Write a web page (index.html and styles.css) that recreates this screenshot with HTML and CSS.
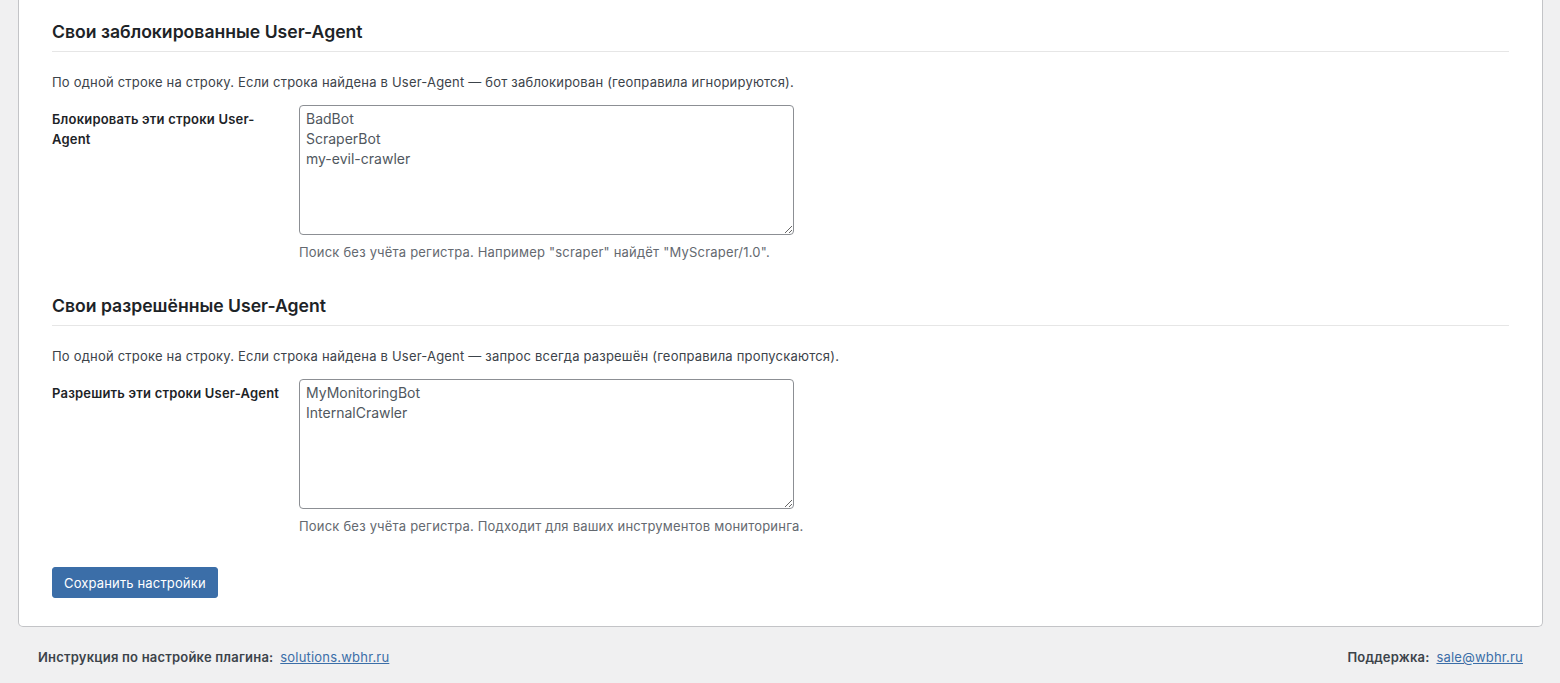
FILE: index.html
```html
<!DOCTYPE html>
<html lang="ru">
<head>
<meta charset="UTF-8">
<title>Настройки User-Agent</title>
<link rel="stylesheet" href="styles.css">
</head>
<body>
<div class="wrap">
    <div class="card">
        <h2 class="section-title">Свои заблокированные User-Agent</h2>
        <p class="section-desc">По одной строке на строку. Если строка найдена в User-Agent — бот заблокирован (геоправила игнорируются).</p>
        <div class="form-row">
            <label class="row-label" for="blockedUa">Блокировать эти строки User-Agent</label>
            <div class="row-field">
                <textarea id="blockedUa" class="ua-list">BadBot
ScraperBot
my-evil-crawler</textarea>
                <p class="hint">Поиск без учёта регистра. Например "scraper" найдёт "MyScraper/1.0".</p>
            </div>
        </div>

        <h2 class="section-title">Свои разрешённые User-Agent</h2>
        <p class="section-desc">По одной строке на строку. Если строка найдена в User-Agent — запрос всегда разрешён (геоправила пропускаются).</p>
        <div class="form-row last">
            <label class="row-label" for="allowedUa">Разрешить эти строки User-Agent</label>
            <div class="row-field">
                <textarea id="allowedUa" class="ua-list">MyMonitoringBot
InternalCrawler</textarea>
                <p class="hint">Поиск без учёта регистра. Подходит для ваших инструментов мониторинга.</p>
            </div>
        </div>

        <div class="submit">
            <button class="btn-primary">Сохранить настройки</button>
        </div>
    </div>
    <div class="footer">
        <div><span class="footer-label">Инструкция по настройке плагина:</span> <a href="#">solutions.wbhr.ru</a></div>
        <div><span class="footer-label">Поддержка:</span> <a href="#">sale@wbhr.ru</a></div>
    </div>
</div>
</body>
</html>
```

FILE: styles.css
```css
body, html {
    margin: 0;
    background-color: #f0f0f1;
    font-family: Inter, "Noto Sans", sans-serif;
    font-size: 13px;
    line-height: 20px;
    letter-spacing: 0.2px;
    color: #3c434a;
}
.wrap {
    padding: 0 17px 0 18px;
}
.card {
    background: #fff;
    border: 1px solid #c3c4c7;
    border-top: none;
    border-radius: 0 0 5px 5px;
    padding: 20px 33px 28px 33px;
}
.section-title {
    margin: 0;
    font-size: 17.6px;
    line-height: 24px;
    font-weight: 600;
    letter-spacing: 0;
    color: #1d2327;
    padding-bottom: 7px;
    border-bottom: 1px solid #e6e6e6;
}
.section-desc {
    margin: 20px 0 13px;
}
.form-row {
    display: flex;
    gap: 17px;
    margin-bottom: 32px;
}
.form-row.last {
    margin-bottom: 31px;
}
.row-label {
    width: 230px;
    flex-shrink: 0;
    padding-top: 4px;
    font-weight: 600;
    color: #1d2327;
}
.ua-list {
    display: block;
    box-sizing: border-box;
    width: 495px;
    height: 130px;
    margin: 0;
    padding: 3px 6px;
    border: 1px solid #8c8f94;
    border-radius: 4px;
    font-family: inherit;
    font-size: 14px;
    line-height: 20px;
    color: #50575e;
    resize: vertical;
}
.hint {
    margin: 7px 0 0;
    color: #646970;
}
.btn-primary {
    display: block;
    font-family: inherit;
    font-size: 13px;
    letter-spacing: 0.15px;
    line-height: 28px;
    height: 31px;
    padding: 0 11px;
    background: #3b6ea8;
    border: 1px solid #3b6ea8;
    border-radius: 3px;
    color: #fff;
    cursor: pointer;
}
.footer {
    display: flex;
    justify-content: space-between;
    padding: 20px 20px;
}
.footer-label {
    font-weight: 600;
    margin-right: 3px;
}
.footer a {
    color: #3b6ea8;
}
```
